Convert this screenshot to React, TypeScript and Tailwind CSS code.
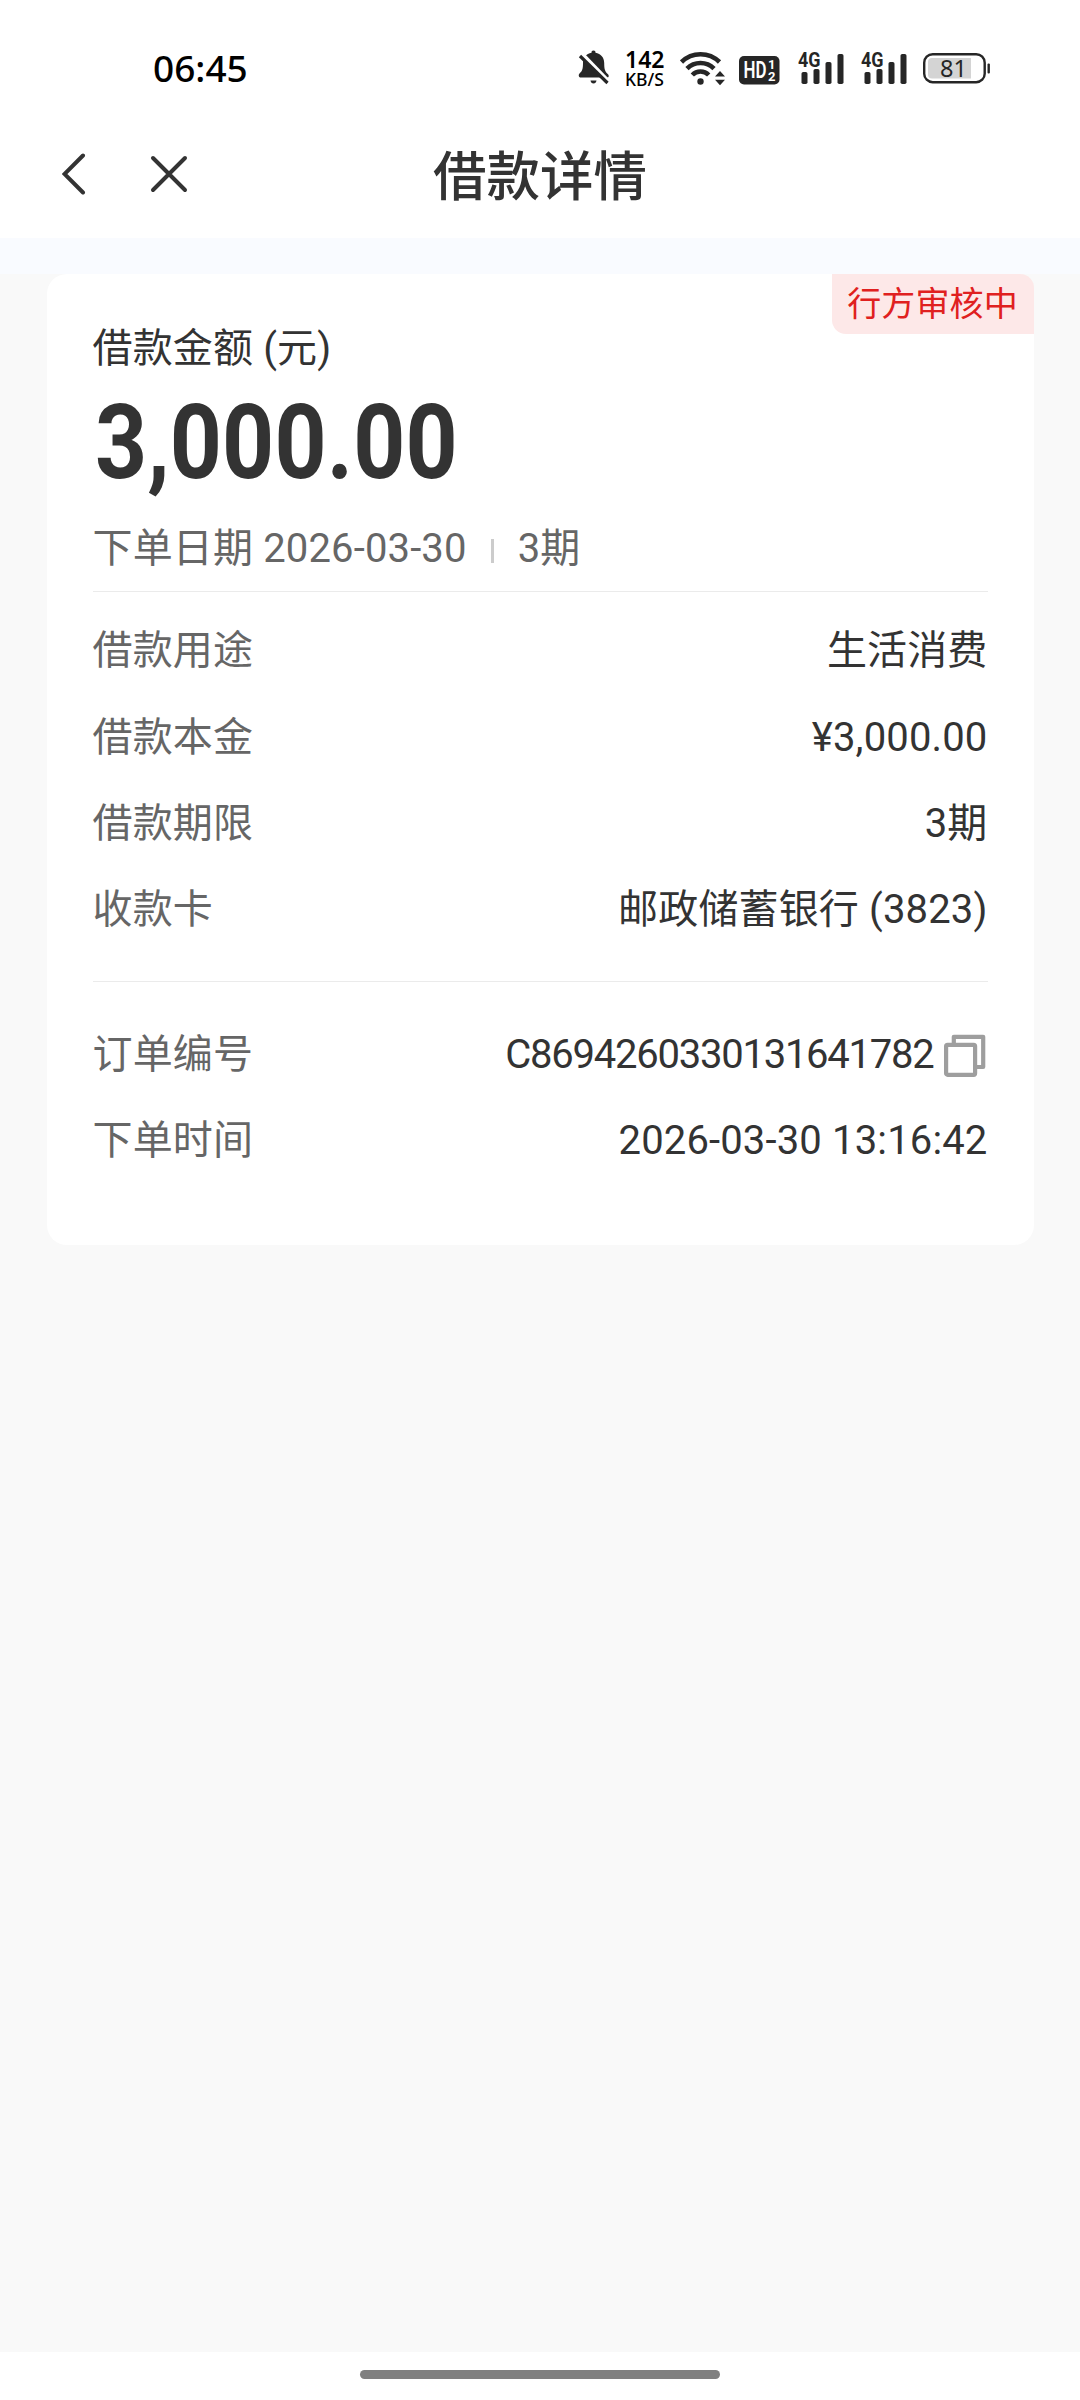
import React from 'react';

const BellOff = () => (
  <svg width="32" height="36" viewBox="0 0 32 36" fill="#262626">
    <path d="M15.500 0.500c1.500 0 2 .9 2 2.200 5.300.900 8.700 4.800 8.700 10.300 0 6 .6 8.500 3.800 11.300.9.800 1 2.700 0 3.200H2c-1.500-.5-1.700-2.900-.5-4 2.800-2.500 3.500-4.500 3.500-10.500 0-5.500 3.200-9.400 8.500-10.300 0-1.300.5-2.200 2-2.200Z" />
    <path d="M12.500 30.500h6c-.3 2-1.400 3-3 3s-2.700-1-3-3Z" />
    <path d="M4 4 32 33" stroke="#fff" strokeWidth="4" />
    <path d="M2 6 29.500 33" stroke="#262626" strokeWidth="3.200" />
  </svg>
);

const Wifi = () => (
  <svg width="46" height="36" viewBox="0 0 46 36" fill="none">
    <g stroke="#262626" strokeWidth="4.600">
      <path d="M1.500 12a27 27 0 0 1 38 0" />
      <path d="M7 18.600a19 19 0 0 1 27 0" />
      <path d="M12.300 25a11.500 11.500 0 0 1 16.400 0" />
    </g>
    <circle cx="20.500" cy="31.500" r="3.200" fill="#262626" />
    <path d="M40 21 45 26.500H35ZM40 35.200 35 29.700h10Z" fill="#262626" />
  </svg>
);

const HdBadge = () => (
  <svg width="41" height="29" viewBox="0 0 41 29">
    <rect width="40.500" height="28.500" rx="5" fill="#262626" />
    <g fill="#fff" fontFamily="Roboto, sans-serif" fontWeight="700">
      <text x="4.500" y="21.700" fontSize="23" fontWeight="600" textLength="23" lengthAdjust="spacingAndGlyphs">HD</text>
      <text x="29" y="13" fontSize="13">1</text>
      <text x="29" y="25" fontSize="13">2</text>
    </g>
  </svg>
);

const Signal = () => (
  <svg width="47" height="44" viewBox="0 -5 47 44" fill="#262626">
    <rect x="3.500" y="21" width="6" height="12" rx="1.800" />
    <rect x="15.500" y="18" width="6" height="15" rx="1.800" />
    <rect x="27.500" y="11" width="6" height="22" rx="1.800" />
    <rect x="39.500" y="3" width="6" height="30" rx="1.800" />
    <text x="0" y="16" fontSize="20.500" fontWeight="700" fontFamily="Roboto, sans-serif" textLength="22.500" lengthAdjust="spacingAndGlyphs" stroke="#fff" strokeWidth="2" paintOrder="stroke">4G</text>
  </svg>
);

const Battery = () => (
  <svg width="68" height="31" viewBox="0 0 68 31">
    <rect x="1.200" y="1.200" width="60.500" height="28" rx="8.500" fill="none" stroke="#262626" strokeWidth="2.400" />
    <path d="M9 5h39v20.500H9a4 4 0 0 1-4-4V9a4 4 0 0 1 4-4Z" fill="#d4d4d4" />
    <rect x="64.500" y="10.500" width="2.400" height="10" rx="1" fill="#262626" />
    <text x="30.500" y="23.500" fontSize="23.500" fontFamily="'Noto Sans', sans-serif" textAnchor="middle" fill="#262626">81</text>
  </svg>
);

const CopyIcon = () => (
  <svg width="42" height="44" viewBox="0 0 42 44" fill="none" stroke="#9e9e9e" strokeWidth="4.200" strokeLinejoin="round">
    <path d="M9.800 9V2.800h29.400V33H32" />
    <rect x="2.100" y="10.800" width="29" height="30" rx="1.500" />
  </svg>
);

const Row = ({ label, children }: any) => (
  <div className="flex h-[86.4px] items-center justify-between">
    <span className="text-[#666]">{label}</span>
    <span className="flex items-center text-[#333]">{children}</span>
  </div>
);

const StatusBar = () => (
  <div className="flex h-[136px] items-center justify-between pr-[89px] pl-[153px] text-black">
    <span className="pb-[2px] font-['Noto_Sans',sans-serif] text-[37px] font-medium">06:45</span>
    <div className="flex items-center">
      <BellOff />
      <div className="ml-[15px] flex w-[43px] flex-col pt-px font-['Noto_Sans',sans-serif] font-semibold">
        <span className="text-[23px] leading-[20px]">142</span>
        <span className="text-[17.5px] leading-[20px] font-medium">KB/S</span>
      </div>
      <div className="ml-3">
        <Wifi />
      </div>
      <div className="mt-1 ml-[13px]">
        <HdBadge />
      </div>
      <div className="ml-[18px] flex gap-4">
        <Signal />
        <Signal />
      </div>
      <div className="ml-[15px]">
        <Battery />
      </div>
    </div>
  </div>
);

const NavBar = () => (
  <div className="grid h-[102px] grid-cols-[1fr_auto_1fr] items-center pb-[26px]">
    <div className="flex items-center gap-[64px] pl-[62px]">
      <svg width="24" height="42" viewBox="0 0 24 42" fill="none" stroke="#333" strokeWidth="4" strokeLinecap="round">
        <path d="M21 2.500 2.500 21 21 39.500" />
      </svg>
      <svg width="38" height="38" viewBox="0 0 38 38" fill="none" stroke="#333" strokeWidth="4" strokeLinecap="round">
        <path d="M3 3l32 32M35 3 3 35" />
      </svg>
    </div>
    <h1 className="pt-[7px] text-[53.5px] leading-none font-medium text-[#333]">借款详情</h1>
  </div>
);

const App = () => {
  return (
    <div className="flex h-[2400px] w-[1080px] flex-col bg-white font-[Roboto,'Noto_Sans_CJK_SC',sans-serif] text-[40px] leading-none">
      <StatusBar />
      <NavBar />
      <main className="flex-1 bg-[#f9f9f9]">
        <div className="h-9 bg-[#f9fbff]" />
        <section className="relative mx-[46.5px] h-[971px] rounded-[20px] bg-white px-[46px] pt-[50px] tracking-[0.15px]">
          <div className="absolute top-0 right-0 flex h-[60px] w-[202px] items-center justify-center rounded-tr-[14px] rounded-bl-[14px] bg-[#fde8e8] text-[34px] text-[#e02020]">
            行方审核中
          </div>
          <div className="h-[50px] leading-[50px] text-[#333]">借款金额 (元)</div>
          <div className="h-[138px] origin-left translate-x-[2px] scale-x-[0.87] text-[104.5px] leading-[138px] font-bold text-[#333]">3,000.00</div>
          <div className="flex h-[79px] items-center pb-[5px] text-[#666]">
            <span>下单日期 2026-03-30</span>
            <span className="mx-[24px] mt-1 h-6 w-[3px] bg-[#ccc]" />
            <span>3期</span>
          </div>
          <div className="mb-4 h-px bg-[#ebebeb]" />
          <Row label="借款用途">生活消费</Row>
          <Row label="借款本金">¥3,000.00</Row>
          <Row label="借款期限">3期</Row>
          <Row label="收款卡">邮政储蓄银行 (3823)</Row>
          <div className="mt-[27px] mb-[30px] h-px bg-[#ebebeb]" />
          <Row label="订单编号">
            <span className="mr-[10px] tracking-[-1.25px]">C8694260330131641782</span>
            <span className="mr-[2px] pt-[2px]">
              <CopyIcon />
            </span>
          </Row>
          <Row label="下单时间">2026-03-30 13:16:42</Row>
        </section>
      </main>
      <footer className="flex h-12 justify-center pt-[18px]">
        <div className="h-[9px] w-[360px] rounded-full bg-[#808080]" />
      </footer>
    </div>
  );
};

export default App;
